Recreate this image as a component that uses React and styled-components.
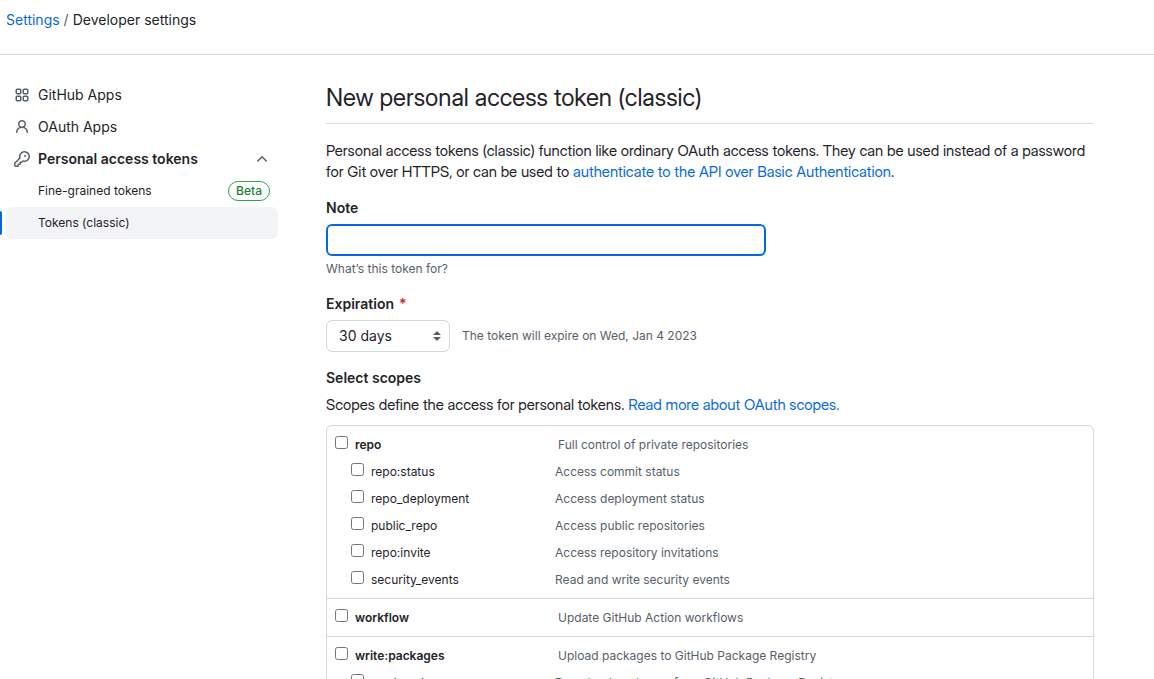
import React from "react";
import styled, { createGlobalStyle, css } from "styled-components";

const color = {
  text: "#1f2328",
  muted: "#57606a",
  link: "#0969da",
  border: "#d0d7de",
  borderSoft: "#d8dee4",
  hover: "#f3f4f6",
  green: "#1a7f37",
  greenBorder: "#2da44e",
  red: "#cf222e",
};

const display = `"Inter Display", Inter, "Liberation Sans", sans-serif`;

const GlobalStyle = createGlobalStyle`
  *, *::before, *::after { box-sizing: border-box; }
  html { scrollbar-width: none; }
  body {
    margin: 0;
    background: #ffffff;
    color: ${color.text};
    font-family: Inter, "Liberation Sans", sans-serif;
    font-size: 14px;
    line-height: 21px;
  }
`;

const Header = styled.header`
  height: 55px;
  padding: 9px 6px 0;
  border-bottom: 1px solid ${color.border};
`;

const Crumbs = styled.ol`
  display: flex;
  gap: 4px;
  margin: 0;
  padding: 0;
  list-style: none;
`;

const Crumb = styled.li`
  & + &::before {
    content: "/";
    margin-right: 4px;
    color: ${color.muted};
  }
`;

const Link = styled.a`
  color: ${color.link};
  text-decoration: none;
`;

const Layout = styled.div`
  display: grid;
  grid-template-columns: 278px minmax(0, 1fr);
  column-gap: 48px;
  padding-right: 60px;
`;

const Sidebar = styled.nav`
  padding-top: 24px;
`;

const NavList = styled.ul`
  margin: 0;
  padding: 0;
  list-style: none;
`;

const NavItem = styled.li`
  position: relative;
  padding-left: 6px;

  ${(p) =>
    p.$current &&
    css`
      &::before {
        content: "";
        position: absolute;
        left: 0;
        top: 4px;
        width: 2px;
        height: 24px;
        border-radius: 0 2px 2px 0;
        background: ${color.link};
      }
    `}
`;

const navRow = css`
  display: flex;
  align-items: center;
  gap: 8px;
  width: 100%;
  height: 32px;
  padding: 0 8px;
  border: 0;
  border-radius: 6px;
  background: transparent;
  color: ${color.text};
  font: inherit;
  line-height: 20px;
  text-align: left;
  text-decoration: none;
`;

const NavLink = styled.a`
  ${navRow}
`;

const NavToggle = styled.button`
  ${navRow}
  font-weight: 600;
  cursor: pointer;
`;

const SubLink = styled.a`
  ${navRow}
  padding-left: 32px;
  font-size: 12px;
  background: ${(p) => (p.$current ? color.hover : "transparent")};
`;

const NavText = styled.span`
  flex: 1;
`;

const Badge = styled.span`
  padding: 0 7px;
  border: 1px solid ${color.greenBorder};
  border-radius: 20px;
  color: ${color.green};
  font-size: 12px;
  font-weight: 500;
  line-height: 18px;
`;

const Icon = styled.svg`
  flex: none;
  width: 16px;
  height: 16px;
  fill: ${color.muted};
`;

const Main = styled.main`
  padding-top: 24px;
`;

const Title = styled.h1`
  margin: 0 0 16px;
  padding-bottom: 7px;
  border-bottom: 1px solid ${color.borderSoft};
  font-family: ${display};
  font-size: 24px;
  font-weight: 400;
  line-height: 37px;
`;

const Text = styled.p`
  margin: 0;
  font-family: ${display};
  font-size: 15px;
`;

const Field = styled.div`
  margin-top: 15px;
`;

const FieldLabel = styled.label`
  display: block;
  margin-bottom: 6px;
  font-weight: 600;
`;

const Required = styled.span`
  margin-left: 5px;
  color: ${color.red};
`;

const TextInput = styled.input`
  display: block;
  width: 440px;
  max-width: 100%;
  height: 32px;
  padding: 5px 12px;
  border: 2px solid ${color.link};
  border-radius: 6px;
  outline: none;
  background: #ffffff;
  font: inherit;
`;

const Hint = styled.p`
  margin: ${(p) => (p.$below ? "4px 0 0" : "0")};
  color: ${color.muted};
  font-size: 12px;
  line-height: 18px;
`;

const Inline = styled.div`
  display: flex;
  align-items: center;
  gap: 12px;
`;

const SelectBox = styled.div`
  position: relative;
  width: 124px;
`;

const Select = styled.select`
  appearance: none;
  display: block;
  width: 100%;
  height: 32px;
  padding: 0 24px 1px 12px;
  border: 1px solid ${color.border};
  border-radius: 6px;
  background: #ffffff;
  color: ${color.text};
  font: inherit;
`;

const SelectArrows = styled.svg`
  position: absolute;
  top: 8px;
  right: 5px;
  width: 16px;
  height: 16px;
  fill: #586069;
  pointer-events: none;
`;

const SectionTitle = styled.h2`
  margin: 15px 0 6px;
  font-size: 14px;
  font-weight: 600;
  line-height: 21px;
`;

const Scopes = styled.ul`
  margin: 10px 0 0;
  padding: 0;
  border: 1px solid ${color.border};
  border-radius: 6px;
  list-style: none;
`;

const ScopeGroup = styled.li`
  padding: 5px 8px;

  & + & {
    border-top: 1px solid ${color.border};
  }
`;

const ScopeRow = styled.div`
  display: grid;
  grid-template-columns: ${(p) => (p.$child ? "204px" : "223px")} 1fr;
  align-items: center;
  height: 27px;
  padding-left: ${(p) => (p.$child ? "16px" : "0")};
  font-size: 12px;
  line-height: 18px;
`;

const ScopeName = styled.label`
  display: flex;
  align-items: center;
  gap: 7px;
  font-weight: ${(p) => (p.$child ? 400 : 600)};
`;

const Checkbox = styled.input`
  width: 13px;
  height: 13px;
  margin: 0 0 4px;
`;

const ScopeInfo = styled.span`
  color: ${color.muted};
`;

const APPS =
  "M1.5 3.25c0-.966.784-1.75 1.75-1.75h2.5c.966 0 1.75.784 1.75 1.75v2.5A1.75 1.75 0 0 1 5.75 7.5h-2.5A1.75 1.75 0 0 1 1.5 5.75Zm7 0c0-.966.784-1.75 1.75-1.75h2.5c.966 0 1.75.784 1.75 1.75v2.5a1.75 1.75 0 0 1-1.75 1.75h-2.5A1.75 1.75 0 0 1 8.5 5.75Zm-7 7c0-.966.784-1.75 1.75-1.75h2.5c.966 0 1.75.784 1.75 1.75v2.5a1.75 1.75 0 0 1-1.75 1.75h-2.5a1.75 1.75 0 0 1-1.75-1.75Zm7 0c0-.966.784-1.75 1.75-1.75h2.5c.966 0 1.75.784 1.75 1.75v2.5a1.75 1.75 0 0 1-1.75 1.75h-2.5a1.75 1.75 0 0 1-1.75-1.75ZM3.25 3a.25.25 0 0 0-.25.25v2.5c0 .138.112.25.25.25h2.5A.25.25 0 0 0 6 5.75v-2.5A.25.25 0 0 0 5.75 3Zm7 0a.25.25 0 0 0-.25.25v2.5c0 .138.112.25.25.25h2.5a.25.25 0 0 0 .25-.25v-2.5a.25.25 0 0 0-.25-.25Zm-7 7a.25.25 0 0 0-.25.25v2.5c0 .138.112.25.25.25h2.5a.25.25 0 0 0 .25-.25v-2.5a.25.25 0 0 0-.25-.25Zm7 0a.25.25 0 0 0-.25.25v2.5c0 .138.112.25.25.25h2.5a.25.25 0 0 0 .25-.25v-2.5a.25.25 0 0 0-.25-.25Z";
const PERSON =
  "M10.561 8.073a6.005 6.005 0 0 1 3.432 5.142.75.75 0 1 1-1.498.07 4.5 4.5 0 0 0-8.99 0 .75.75 0 0 1-1.498-.07 6.004 6.004 0 0 1 3.431-5.142 3.999 3.999 0 1 1 5.123 0ZM10.5 5a2.5 2.5 0 1 0-5 0 2.5 2.5 0 0 0 5 0Z";
const KEY =
  "M10.5 0a5.499 5.499 0 1 1-1.288 10.848l-.932.932a.749.749 0 0 1-.53.22H7v.75a.749.749 0 0 1-.22.53l-.5.5a.749.749 0 0 1-.53.22H5v.75a.749.749 0 0 1-.22.53l-.5.5a.749.749 0 0 1-.53.22h-2A1.75 1.75 0 0 1 0 14.25v-2c0-.199.079-.389.22-.53l4.932-4.932A5.5 5.5 0 0 1 10.5 0Zm-4 5.5c-.001.431.069.86.205 1.269a.75.75 0 0 1-.181.768L1.5 12.56v1.69c0 .138.112.25.25.25h1.69l.06-.06v-1.19a.75.75 0 0 1 .75-.75h1.19l.06-.06v-1.19a.75.75 0 0 1 .75-.75h1.19l1.023-1.025a.75.75 0 0 1 .768-.18A4 4 0 1 0 6.5 5.5ZM11 6a1 1 0 1 1 0-2 1 1 0 0 1 0 2Z";
const CHEVRON_UP =
  "M3.22 10.53a.749.749 0 0 1 0-1.06l4.25-4.25a.749.749 0 0 1 1.06 0l4.25 4.25a.749.749 0 1 1-1.06 1.06L8 6.811 4.28 10.53a.749.749 0 0 1-1.06 0Z";

const Glyph = ({ d }) => (
  <Icon viewBox="0 0 16 16" aria-hidden="true">
    <path d={d} />
  </Icon>
);

const scopes = [
  {
    name: "repo",
    info: "Full control of private repositories",
    children: [
      { name: "repo:status", info: "Access commit status" },
      { name: "repo_deployment", info: "Access deployment status" },
      { name: "public_repo", info: "Access public repositories" },
      { name: "repo:invite", info: "Access repository invitations" },
      { name: "security_events", info: "Read and write security events" },
    ],
  },
  { name: "workflow", info: "Update GitHub Action workflows", children: [] },
  {
    name: "write:packages",
    info: "Upload packages to GitHub Package Registry",
    children: [
      { name: "read:packages", info: "Download packages from GitHub Package Registry" },
    ],
  },
];

const Scope = ({ scope, child }) => (
  <ScopeRow $child={child}>
    <ScopeName $child={child}>
      <Checkbox type="checkbox" name="scopes" value={scope.name} />
      {scope.name}
    </ScopeName>
    <ScopeInfo>{scope.info}</ScopeInfo>
  </ScopeRow>
);

export default function App() {
  return (
    <>
      <GlobalStyle />
      <Header>
        <Crumbs>
          <Crumb>
            <Link href="#settings">Settings</Link>
          </Crumb>
          <Crumb>Developer settings</Crumb>
        </Crumbs>
      </Header>
      <Layout>
        <Sidebar>
          <NavList>
            <NavItem>
              <NavLink href="#apps">
                <Glyph d={APPS} />
                <NavText>GitHub Apps</NavText>
              </NavLink>
            </NavItem>
            <NavItem>
              <NavLink href="#oauth">
                <Glyph d={PERSON} />
                <NavText>OAuth Apps</NavText>
              </NavLink>
            </NavItem>
            <NavItem>
              <NavToggle type="button" aria-expanded="true">
                <Glyph d={KEY} />
                <NavText>Personal access tokens</NavText>
                <Glyph d={CHEVRON_UP} />
              </NavToggle>
            </NavItem>
            <NavItem>
              <SubLink href="#fine-grained">
                <NavText>Fine-grained tokens</NavText>
                <Badge>Beta</Badge>
              </SubLink>
            </NavItem>
            <NavItem $current>
              <SubLink href="#classic" $current aria-current="page">
                <NavText>Tokens (classic)</NavText>
              </SubLink>
            </NavItem>
          </NavList>
        </Sidebar>
        <Main>
          <Title>New personal access token (classic)</Title>
          <Text>
            Personal access tokens (classic) function like ordinary OAuth access tokens. They can be
            used instead of a password for Git over HTTPS, or can be used to{" "}
            <Link href="#basic-auth">authenticate to the API over Basic Authentication</Link>.
          </Text>
          <Field>
            <FieldLabel htmlFor="note">Note</FieldLabel>
            <TextInput id="note" type="text" />
            <Hint $below>What’s this token for?</Hint>
          </Field>
          <Field>
            <FieldLabel htmlFor="expiration">
              Expiration<Required>*</Required>
            </FieldLabel>
            <Inline>
              <SelectBox>
                <Select id="expiration" defaultValue="30">
                  <option value="30">30 days</option>
                </Select>
                <SelectArrows viewBox="0 0 16 16" aria-hidden="true">
                  <path d="m4.427 9.427 3.396 3.396a.251.251 0 0 0 .354 0l3.396-3.396A.25.25 0 0 0 11.396 9H4.604a.25.25 0 0 0-.177.427Zm0-2.854 3.396-3.396a.251.251 0 0 1 .354 0l3.396 3.396A.25.25 0 0 1 11.396 7H4.604a.25.25 0 0 1-.177-.427Z" />
                </SelectArrows>
              </SelectBox>
              <Hint>The token will expire on Wed, Jan 4 2023</Hint>
            </Inline>
          </Field>
          <SectionTitle>Select scopes</SectionTitle>
          <Text>
            Scopes define the access for personal tokens.{" "}
            <Link href="#scopes">Read more about OAuth scopes.</Link>
          </Text>
          <Scopes>
            {scopes.map((scope) => (
              <ScopeGroup key={scope.name}>
                <Scope scope={scope} />
                {scope.children.map((item) => (
                  <Scope key={item.name} scope={item} child />
                ))}
              </ScopeGroup>
            ))}
          </Scopes>
        </Main>
      </Layout>
    </>
  );
}
